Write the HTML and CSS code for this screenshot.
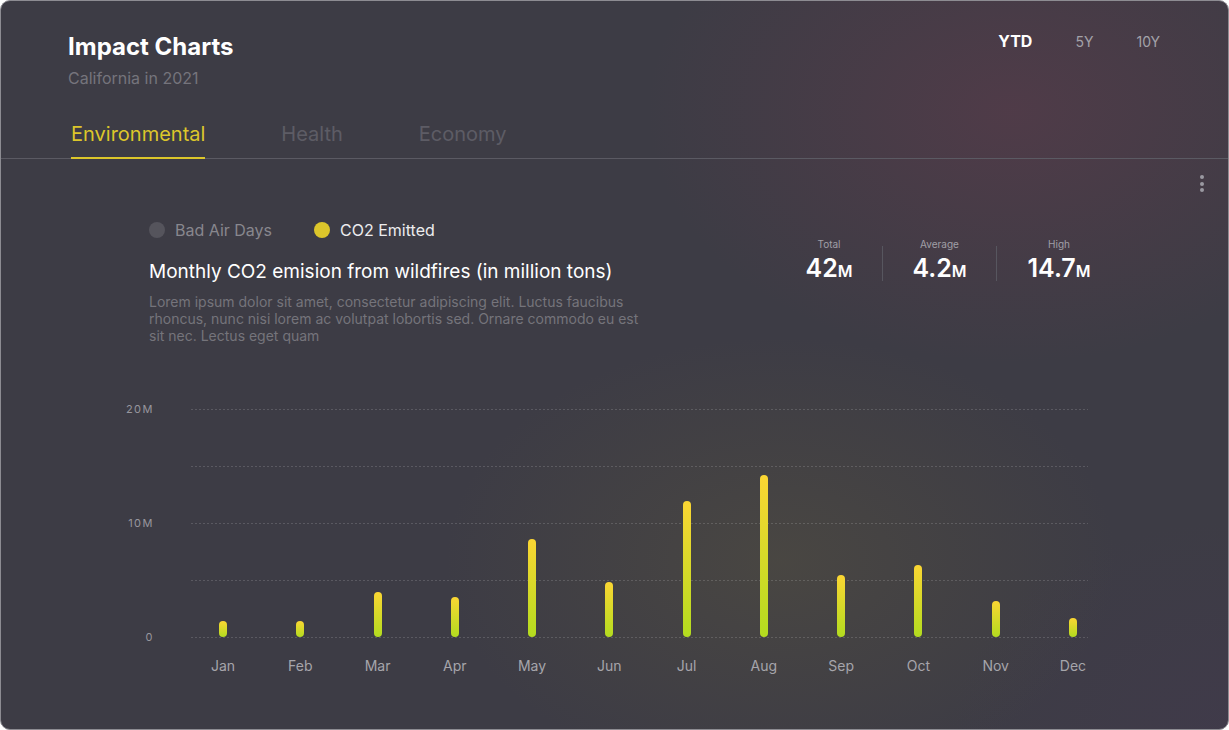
FILE: index.html
```html
<!DOCTYPE html>
<html lang="en">
<head>
<meta charset="utf-8">
<title>Impact Charts</title>
<link rel="stylesheet" href="styles.css">
</head>
<body>
<div class="card">
  <header class="top">
    <div class="heading">
      <h1 class="title">Impact Charts</h1>
      <p class="subtitle">California in 2021</p>
    </div>
    <nav class="ranges">
      <span class="range active">YTD</span>
      <span class="range">5Y</span>
      <span class="range">10Y</span>
    </nav>
  </header>

  <nav class="tabs">
    <span class="tab active">Environmental</span>
    <span class="tab">Health</span>
    <span class="tab">Economy</span>
  </nav>

  <section class="panel">
    <div class="toolbar">
      <button class="kebab" aria-label="More"><span></span><span></span><span></span></button>
    </div>

    <div class="info">
      <div class="summary">
        <div class="legend">
          <span class="legend-item"><span class="dot dot-off"></span>Bad Air Days</span>
          <span class="legend-item on"><span class="dot dot-on"></span>CO2 Emitted</span>
        </div>
        <h2 class="chart-title">Monthly CO2 emision from wildfires (in million tons)</h2>
        <p class="desc">Lorem ipsum dolor sit amet, consectetur adipiscing elit. Luctus faucibus rhoncus, nunc nisi lorem ac volutpat lobortis sed. Ornare commodo eu est sit nec. Lectus eget quam</p>
      </div>
      <div class="stats">
        <div class="stat s1"><div class="stat-label">Total</div><div class="stat-value">42<small>M</small></div></div>
        <span class="vr"></span>
        <div class="stat s2"><div class="stat-label">Average</div><div class="stat-value">4.2<small>M</small></div></div>
        <span class="vr"></span>
        <div class="stat s3"><div class="stat-label">High</div><div class="stat-value">14.7<small>M</small></div></div>
      </div>
    </div>

    <div class="chart">
      <div class="yaxis">
        <span class="ylab">20M</span>
        <span class="ylab">10M</span>
        <span class="ylab">0</span>
      </div>
      <div class="plot">
        <div class="gridlines">
          <span class="gl"></span><span class="gl"></span><span class="gl"></span><span class="gl"></span><span class="gl"></span>
        </div>
        <div class="bars">
          <div class="col"><span class="bar" style="height:16px"></span></div>
          <div class="col"><span class="bar" style="height:16px"></span></div>
          <div class="col"><span class="bar" style="height:45px"></span></div>
          <div class="col"><span class="bar" style="height:40px"></span></div>
          <div class="col"><span class="bar" style="height:98px"></span></div>
          <div class="col"><span class="bar" style="height:55px"></span></div>
          <div class="col"><span class="bar" style="height:136px"></span></div>
          <div class="col"><span class="bar" style="height:162px"></span></div>
          <div class="col"><span class="bar" style="height:62px"></span></div>
          <div class="col"><span class="bar" style="height:72px"></span></div>
          <div class="col"><span class="bar" style="height:36px"></span></div>
          <div class="col"><span class="bar" style="height:19px"></span></div>
        </div>
      </div>
      <div class="spacer"></div>
      <div class="months">
        <span class="month">Jan</span><span class="month">Feb</span><span class="month">Mar</span><span class="month">Apr</span>
        <span class="month">May</span><span class="month">Jun</span><span class="month">Jul</span><span class="month">Aug</span>
        <span class="month">Sep</span><span class="month">Oct</span><span class="month">Nov</span><span class="month">Dec</span>
      </div>
    </div>
  </section>
</div>
</body>
</html>
```

FILE: styles.css
```css
* { box-sizing: border-box; }

html, body {
  margin: 0;
  padding: 0;
  background: #ffffff;
}

body {
  font-family: Inter, "Noto Sans", "Liberation Sans", sans-serif;
  color: #ffffff;
}

.card {
  width: 1229px;
  height: 730px;
  border: 1px solid #8d8c92;
  border-radius: 10px;
  overflow: hidden;
  background:
    radial-gradient(ellipse 520px 360px at 1010px 110px, rgba(112, 58, 78, 0.36), rgba(112, 58, 78, 0) 70%),
    radial-gradient(ellipse 480px 320px at 780px 560px, rgba(98, 92, 60, 0.32), rgba(98, 92, 60, 0) 70%),
    radial-gradient(ellipse 400px 300px at 1229px 730px, rgba(70, 55, 85, 0.3), rgba(70, 55, 85, 0) 70%),
    #3d3c45;
}

/* ---------- header ---------- */
.top {
  display: flex;
  justify-content: space-between;
  align-items: flex-start;
  padding: 31px 68px 0 67px;
}

.title {
  margin: 0;
  font-size: 24px;
  line-height: 30px;
  font-weight: 700;
  color: #ffffff;
}

.subtitle {
  margin: 6px 0 0;
  font-size: 16px;
  line-height: 20px;
  color: #75747c;
}

.ranges {
  display: flex;
  align-items: baseline;
  gap: 43px;
  padding-top: 0;
}

.range {
  font-size: 14px;
  line-height: 18px;
  color: #a3a2a9;
}

.range.active {
  font-size: 16px;
  font-weight: 700;
  color: #ffffff;
}

/* ---------- tabs ---------- */
.tabs {
  display: flex;
  gap: 76px;
  margin-top: 34px;
  padding-left: 70px;
  border-bottom: 1px solid #5b5a63;
}

.tab {
  font-size: 20px;
  line-height: 24px;
  padding-bottom: 11px;
  margin-bottom: -1px;
  border-bottom: 2px solid transparent;
  color: #5d5c65;
}

.tab.active {
  color: #dcc62b;
  border-bottom-color: #dcc62b;
}

/* ---------- panel ---------- */
.toolbar {
  display: flex;
  justify-content: flex-end;
  padding: 16px 24px 0 0;
}

.kebab {
  display: flex;
  flex-direction: column;
  gap: 2.5px;
  padding: 0;
  border: 0;
  background: none;
}

.kebab span {
  width: 4px;
  height: 4px;
  border-radius: 50%;
  background: #9a99a1;
}

.info {
  display: flex;
  justify-content: space-between;
  align-items: flex-start;
  margin-top: 28px;
  padding: 0 107px 0 148px;
}

.legend {
  display: flex;
  gap: 42px;
}

.legend-item {
  display: flex;
  align-items: center;
  gap: 10px;
  font-size: 16px;
  line-height: 20px;
  color: #88878e;
}

.legend-item.on {
  color: #ececee;
}

.dot {
  width: 16px;
  height: 16px;
  border-radius: 50%;
}

.dot-off { background: #55545c; }
.dot-on { background: #dcc62b; }

.chart-title {
  margin: 20px 0 0;
  font-size: 19px;
  line-height: 24px;
  font-weight: 400;
  color: #ffffff;
}

.desc {
  margin: 9px 0 0;
  width: 500px;
  font-size: 14px;
  line-height: 17px;
  color: #75747b;
}

.stats {
  display: flex;
  align-items: flex-start;
  margin-top: 18px;
}

.stat { text-align: center; }
.s1 { width: 106px; }
.s2 { width: 113px; }
.s3 { width: 124px; }

.stat-label {
  font-size: 10px;
  line-height: 12px;
  color: #a09fa6;
}

.stat-value {
  margin-top: 3px;
  font-size: 25px;
  line-height: 30px;
  font-weight: 600;
  color: #ffffff;
}

.stat-value small {
  font-size: 16px;
  font-weight: 600;
}

.vr {
  width: 1px;
  height: 35px;
  margin-top: 8px;
  background: #57565f;
}

/* ---------- chart ---------- */
.chart {
  display: grid;
  grid-template-columns: 54px 897px;
  grid-template-rows: 228px auto;
  column-gap: 37px;
  row-gap: 19px;
  margin-top: 65px;
  margin-left: 99px;
}

.yaxis {
  display: flex;
  flex-direction: column;
  justify-content: space-between;
  align-items: flex-end;
}

.ylab {
  height: 0;
  line-height: 0;
  font-size: 11px;
  letter-spacing: 1.5px;
  color: #97969d;
}

.plot {
  display: grid;
}

.gridlines,
.bars {
  grid-area: 1 / 1;
}

.gridlines {
  display: flex;
  flex-direction: column;
  justify-content: space-between;
  height: 229px;
}

.gl {
  display: block;
  height: 1px;
  background-image: linear-gradient(to right, rgba(255, 255, 255, 0.15) 50%, rgba(255, 255, 255, 0) 50%);
  background-size: 4px 1px;
}

.bars,
.months {
  display: flex;
  justify-content: space-between;
  padding-left: 17px;
}

.bars {
  align-items: flex-end;
  height: 228px;
}

.col {
  width: 30px;
  display: flex;
  justify-content: center;
}

.bar {
  display: block;
  width: 8px;
  border-radius: 4px;
  background: linear-gradient(to bottom, #fbd633, #b3dc1f);
}

.month {
  width: 30px;
  white-space: nowrap;
  display: flex;
  justify-content: center;
  font-size: 14px;
  line-height: 20px;
  color: #a6a5ab;
}
```
